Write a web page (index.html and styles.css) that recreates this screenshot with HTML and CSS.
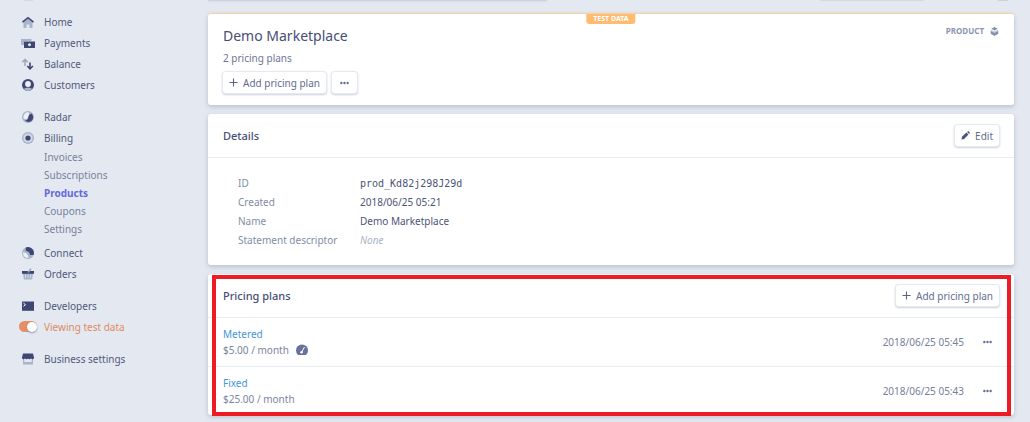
FILE: index.html
```html
<!DOCTYPE html>
<html lang="en">
<head>
<meta charset="utf-8">
<title>Demo Marketplace</title>
<link rel="stylesheet" href="styles.css">
</head>
<body>
<div class="app">
  <nav class="sidebar" aria-label="Main">
    <span class="logo-edge"></span>
    <div class="group">
      <a class="item" href="#"><svg class="icon" viewBox="0 0 14 14"><path class="light" d="M2.500 7L7 3.500 11.500 7v6H8.500V9.500h-3V13h-3z"/><path class="line" d="M1.500 7.200L7 2.700l5.500 4.500"/></svg>Home</a>
      <a class="item" href="#"><svg class="icon" viewBox="0 0 14 14"><path class="light" d="M0 3h10.500v2H3v4H0z"/><path class="dark" fill-rule="evenodd" d="M3 5.500h11V12H3zM8.500 7.200a1.500 1.500 0 1 0 .01 0z"/></svg>Payments</a>
      <a class="item" href="#"><svg class="icon" viewBox="0 0 14 14"><path class="line pale" d="M4 9V2.500M1.200 5.200L4 2.400l2.800 2.800"/><path class="line" d="M6.300 9L9 11.800 11.900 9M9 5.500v6"/></svg>Balance</a>
      <a class="item" href="#"><svg class="icon" viewBox="0 0 14 14"><circle class="dark" cx="7" cy="7" r="6"/><circle class="white" cx="7" cy="6" r="2.900"/><path class="light" d="M2.600 11.100Q4 9.500 7 9.500t4.400 1.600A6 6 0 0 1 2.600 11.100z"/></svg>Customers</a>
    </div>
    <div class="group">
      <a class="item" href="#"><svg class="icon" viewBox="0 0 14 14"><circle class="light" cx="7" cy="7" r="6"/><path class="white" d="M8 2.500A4.500 4.500 0 0 0 3 9l2.500.3L8 6z"/><path class="dark" d="M10.300 3.600A4.600 4.600 0 1 1 4 10.200C6.200 10.200 7.200 9.300 7.300 7.500S8.300 4.500 10.300 3.600z"/></svg>Radar</a>
      <a class="item" href="#"><svg class="icon" viewBox="0 0 14 14"><circle class="light" cx="7" cy="7" r="6"/><circle class="soft" cx="7" cy="7" r="4.600"/><circle class="dark" cx="7" cy="7" r="2.600"/></svg>Billing</a>
      <div class="subnav">
        <a class="subitem" href="#">Invoices</a>
        <a class="subitem" href="#">Subscriptions</a>
        <a class="subitem current" href="#" aria-current="page">Products</a>
        <a class="subitem" href="#">Coupons</a>
        <a class="subitem" href="#">Settings</a>
      </div>
      <a class="item" href="#"><svg class="icon" viewBox="0 0 14 14"><circle class="light" cx="7" cy="7" r="6"/><path class="white" d="M2 6.500C5 6 7 8 7.500 12A5 5 0 0 1 2 6.500z"/><path class="dark" d="M4.800 1.500A6 6 0 0 1 12.600 9H9A4 4 0 0 0 4.800 5z"/></svg>Connect</a>
      <a class="item" href="#"><svg class="icon" viewBox="0 0 14 14"><path class="light" fill-rule="evenodd" d="M2 6h10l-.8 6.500H2.800zM4.300 7.500V11h.7V7.500zM6.700 7.500V11h.7V7.500zM9 7.500V11h.7V7.500z"/><path class="dark" d="M1 4h12v2.800H1z"/><path class="line pale" d="M7 5.500L10 1.800"/></svg>Orders</a>
    </div>
    <div class="group">
      <a class="item" href="#"><svg class="icon" viewBox="0 0 14 14"><path class="dark" d="M1 2.500h12v9.300H1z"/><path class="prompt" d="M2.500 4.200L4.500 5.700l-2 1.500"/></svg>Developers</a>
      <label class="item test"><input class="switch" type="checkbox" role="switch" checked>Viewing test data</label>
    </div>
    <div class="group">
      <a class="item" href="#"><svg class="icon" viewBox="0 0 14 14"><path class="light" fill-rule="evenodd" d="M2 5h10v7.500H2zM3.300 7v3h7.400V7z"/><path class="dark" d="M2 1.500h10l1 4a1.500 1.500 0 0 1-3 .3 1.500 1.500 0 0 1-3 0 1.500 1.500 0 0 1-3 0 1.500 1.500 0 0 1-3-.3z"/></svg>Business settings</a>
    </div>
  </nav>

  <main class="content">
    <div class="topbar"><span class="search-edge"></span><span class="link-edge"></span><span class="avatar-edge"></span></div>
    <section class="card summary">
      <span class="test-badge">TEST DATA</span>
      <div class="summary-main">
        <h1 class="title">Demo Marketplace</h1>
        <p class="subtitle">2 pricing plans</p>
        <div class="actions">
          <button class="button" type="button"><svg class="glyph" viewBox="0 0 10 10"><path d="M5 .5v9M.5 5h9"/></svg>Add pricing plan</button>
          <button class="button more" type="button" aria-label="More"><svg class="dots" viewBox="0 0 10 4"><circle cx="1.500" cy="2" r="1.300"/><circle cx="5" cy="2" r="1.300"/><circle cx="8.500" cy="2" r="1.300"/></svg></button>
        </div>
      </div>
      <div class="kind">PRODUCT<svg class="cube" viewBox="0 0 10 10"><path d="M5 0l3.700 2L5 4 1.300 2zM.8 3L5 5.200 9.200 3v4.600L5 10 .8 7.600z"/><path class="notch" d="M0 3.500L5 6l5-2.500"/></svg></div>
    </section>

    <section class="card">
      <header class="card-head">
        <h2 class="heading">Details</h2>
        <button class="button" type="button"><svg class="pencil" viewBox="0 0 10 10"><path d="M.5 9.500l.6-3L6 1.700l2.300 2.300-4.800 4.900zM6.800 1L8 0l2 2-1 1.200z"/></svg>Edit</button>
      </header>
      <dl class="details">
        <dt>ID</dt><dd class="code">prod_Kd82j298J29d</dd>
        <dt>Created</dt><dd>2018/06/25 05:21</dd>
        <dt>Name</dt><dd>Demo Marketplace</dd>
        <dt>Statement descriptor</dt><dd class="none">None</dd>
      </dl>
    </section>

    <section class="card highlighted">
      <header class="card-head">
        <h2 class="heading">Pricing plans</h2>
        <button class="button" type="button"><svg class="glyph" viewBox="0 0 10 10"><path d="M5 .5v9M.5 5h9"/></svg>Add pricing plan</button>
      </header>
      <ul class="plans">
        <li class="plan">
          <div class="plan-info"><a class="plan-name" href="#">Metered</a><span class="price">$5.00 / month<svg class="gauge" viewBox="0 0 12 12"><path d="M2 11a6 6 0 1 1 8 0z"/><path class="needle" d="M5.500 8.500L8.500 3"/><circle class="hub" cx="5.500" cy="8.300" r="1.200"/></svg></span></div>
          <time class="date">2018/06/25 05:45</time>
          <button class="row-more" type="button" aria-label="Metered options"><svg class="dots" viewBox="0 0 10 4"><circle cx="1.500" cy="2" r="1.300"/><circle cx="5" cy="2" r="1.300"/><circle cx="8.500" cy="2" r="1.300"/></svg></button>
        </li>
        <li class="plan">
          <div class="plan-info"><a class="plan-name" href="#">Fixed</a><span class="price">$25.00 / month</span></div>
          <time class="date">2018/06/25 05:43</time>
          <button class="row-more" type="button" aria-label="Fixed options"><svg class="dots" viewBox="0 0 10 4"><circle cx="1.500" cy="2" r="1.300"/><circle cx="5" cy="2" r="1.300"/><circle cx="8.500" cy="2" r="1.300"/></svg></button>
        </li>
      </ul>
    </section>
  </main>
</div>
</body>
</html>
```
FILE: styles.css
```css
* { box-sizing: border-box; }
body {
  margin: 0;
  background: #e4e9f1;
  color: #50597b;
  font: 10px/16px "Noto Sans", "Open Sans", sans-serif;
}
a { color: inherit; text-decoration: none; }
h1, h2, p, dl, dd, ul { margin: 0; padding: 0; }
button { font: inherit; color: inherit; }

.app { display: flex; }

.sidebar {
  position: relative;
  flex: 0 0 208px;
  padding: 11px 0 0 19px;
  display: flex;
  flex-direction: column;
  gap: 11px;
}
.logo-edge {
  position: absolute;
  top: 0;
  left: 24px;
  width: 9px;
  height: 1px;
  background: #d3d9e5;
}
.item { display: flex; align-items: center; height: 21px; }
.icon { width: 14px; height: 14px; margin: 0 9px 0 2px; }
.icon { fill: none; }
.light { fill: #a9b4c9; }
.soft { fill: #d3dae6; }
.dark { fill: #3f4673; }
.white { fill: #edf1f7; }
.line { stroke: #3f4673; stroke-width: 1.6; }
.pale { stroke: #98a3bb; stroke-width: 1.4; }
.prompt { stroke: #fff; stroke-width: 1; }
.subnav { margin: 0 0 4px 25px; }
.subitem { display: block; line-height: 18px; color: #76819b; }
.current { color: #6469df; font-weight: 700; }
.test { color: #e08a64; }
.switch {
  appearance: none;
  width: 18px;
  height: 11px;
  margin: 0 7px 0 0;
  border-radius: 6px;
  background: #e58e68;
  display: flex;
  justify-content: flex-end;
  align-items: center;
}
.switch::before {
  content: "";
  width: 10px;
  height: 10px;
  border-radius: 50%;
  background: #fff;
  box-shadow: 0 1px 2px #8a93a8;
}

.content {
  flex: 1;
  min-width: 0;
  padding: 0 16px 7px 0;
  display: flex;
  flex-direction: column;
  gap: 9px;
}
.topbar { display: flex; height: 4px; align-items: flex-start; }
.search-edge { width: 339px; height: 1px; background: #cbd1dd; box-shadow: 0 1px 2px #d5dae5; }
.link-edge { width: 104px; height: 1px; margin-left: auto; background: #d5dae5; }
.avatar-edge { width: 10px; height: 1px; margin: 0 6px 0 74px; background: #cbd1dd; }

.card {
  position: relative;
  background: #fff;
  border-radius: 3px;
  box-shadow: 0 2px 5px rgba(60, 70, 110, 0.25);
}
.summary {
  display: flex;
  justify-content: space-between;
  padding: 12px 15px;
  border-top: 1px solid #fbcf9c;
}
.test-badge {
  position: absolute;
  top: 0;
  left: 50%;
  transform: translateX(-50%);
  padding: 0 7px;
  border-radius: 0 0 3px 3px;
  background: #ffbb70;
  color: #fff;
  font-size: 7px;
  font-weight: 700;
  line-height: 10px;
}
.title { font-size: 14px; font-weight: 400; line-height: 20px; color: #474e76; }
.subtitle { margin: 4px 0 6px; color: #6b7695; }
.actions { display: flex; gap: 6px; }
.kind {
  display: flex;
  align-items: center;
  gap: 6px;
  height: 10px;
  color: #8a96b0;
  font-size: 8px;
  font-weight: 700;
}
.cube { width: 9px; height: 9px; fill: #8791ad; }
.notch { fill: none; stroke: #fff; stroke-width: 0.7; }

.button {
  display: flex;
  align-items: center;
  gap: 5px;
  height: 21px;
  padding: 0 6px;
  border: 0;
  border-radius: 3px;
  background: #fff;
  color: #626c91;
  box-shadow: 0 0 0 1px #e6e9f0, 0 1px 2px 1px #ccd1dc;
}
.more { padding: 0 8px; }
.glyph { width: 9px; height: 9px; fill: none; stroke: #5b6488; stroke-width: 1.2; }
.dots { width: 9px; height: 4px; fill: #626c91; display: block; }
.pencil { width: 9px; height: 9px; fill: #4a5280; }

.card-head {
  display: flex;
  align-items: center;
  justify-content: space-between;
  height: 44px;
  padding: 0 15px;
  border-bottom: 1px solid #e9edf4;
}
.heading { font-size: 11px; font-weight: 500; color: #474e76; }

.details {
  display: grid;
  grid-template-columns: 122px 1fr;
  padding: 16px 30px 15px;
  line-height: 19px;
}
.details dt { color: #828da5; }
.details dd { color: #4c5475; }
.details .code { font-family: "DejaVu Sans Mono", monospace; }
.details .none { color: #a9b2c6; font-style: italic; }

.highlighted::after {
  content: "";
  position: absolute;
  inset: 1px 3px -1px 4px;
  border: 4px solid #ed1c24;
  pointer-events: none;
}
.plans { list-style: none; }
.plan { display: flex; align-items: center; padding: 8px 15px; }
.plan + .plan { border-top: 1px solid #e9edf4; }
.plan-info { flex: 1; display: flex; flex-direction: column; align-items: flex-start; }
.plan-name { color: #4396d8; }
.price { display: flex; align-items: center; gap: 7px; color: #7a859e; }
.gauge { width: 12px; height: 12px; fill: #68739a; }
.needle { stroke: #fff; stroke-width: 1; }
.hub { fill: #fff; }
.date { color: #76819b; }
.row-more { margin-left: 12px; padding: 7px; border: 0; background: none; }
```
